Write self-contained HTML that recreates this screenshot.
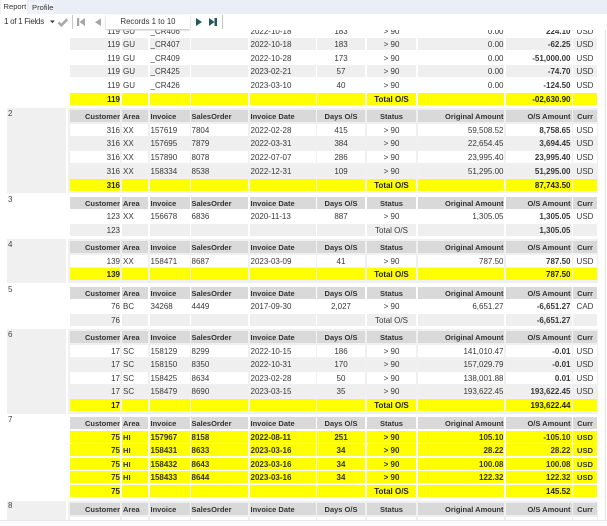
<!DOCTYPE html>
<html><head><meta charset="utf-8"><style>
html,body{margin:0;padding:0;background:#fff;width:607px;height:526px;overflow:hidden}
body{position:relative;font:8px "Liberation Sans",sans-serif;color:#383838}
#c{position:absolute;left:0;top:0;width:607px;height:526px;overflow:hidden;filter:blur(.25px)}
.bg{position:absolute;background:#f0f0f0}
.g{position:absolute;left:8px;font-size:8px;color:#444}
.r{position:absolute;left:0;width:597px;height:12.4px;line-height:13.4px}
.r span{position:absolute;top:0;height:100%;white-space:nowrap;box-sizing:border-box}
.r span:nth-child(1){left:70px;width:50px;text-align:right}
.r span:nth-child(2){left:122px;width:26px;padding-left:1px}
.r span:nth-child(3){left:149.5px;width:40px;padding-left:1px}
.r span:nth-child(4){left:191px;width:57px;padding-left:.5px}
.r span:nth-child(5){left:250px;width:66px;padding-left:.5px}
.r span:nth-child(6){left:317px;width:48px;text-align:center}
.r span:nth-child(7){left:367px;width:49px;text-align:center}
.r span:nth-child(8){left:418px;width:86px;text-align:right;padding-right:.5px}
.r span:nth-child(9){left:506px;width:66px;text-align:right;padding-right:1.5px;font-weight:bold}
.r span:nth-child(10){left:573px;width:24px;text-align:center}
.h span{background:#d9d9d9;font-weight:bold;font-size:7.5px;color:#333}
.a span{background:#efefef}
.w span{background:#fff}
.y span{background:#ff0;color:#222}
.y span:nth-child(1),.y span:nth-child(7){font-weight:bold}
.f span{font-weight:bold;font-size:8px;color:#333}
.f span:nth-child(2),.f span:nth-child(10){font-size:7.6px}
.t span:nth-child(9){font-weight:bold}
#tabs{position:absolute;left:0;top:0;width:607px;height:14px;background:#e9eef7}
#tb{position:absolute;left:0;top:14px;width:607px;height:16px;background:#fff}
.abs{position:absolute}
</style></head><body><div id="c">
<div class="bg" style="left:7px;top:108px;width:59px;height:85px"></div>
<div class="bg" style="left:68px;top:108px;width:530px;height:85px"></div>
<div class="bg" style="left:7px;top:239px;width:59px;height:44px"></div>
<div class="bg" style="left:68px;top:239px;width:530px;height:44px"></div>
<div class="bg" style="left:7px;top:329px;width:59px;height:85px"></div>
<div class="bg" style="left:68px;top:329px;width:530px;height:85px"></div>
<div class="bg" style="left:7px;top:501px;width:59px;height:19px"></div>
<div class="bg" style="left:68px;top:501px;width:530px;height:19px"></div>

<div class="g" style="top:109px">2</div>
<div class="g" style="top:195px">3</div>
<div class="g" style="top:240px">4</div>
<div class="g" style="top:285px">5</div>
<div class="g" style="top:330px">6</div>
<div class="g" style="top:415px">7</div>
<div class="g" style="top:501px">8</div>

<div class="r w" style="top:25px"><span>119</span><span>GU</span><span>_CR406</span><span></span><span>2022-10-18</span><span>183</span><span>&gt; 90</span><span>0.00</span><span>224.10</span><span>USD</span></div>
<div class="r a" style="top:38px"><span>119</span><span>GU</span><span>_CR407</span><span></span><span>2022-10-18</span><span>183</span><span>&gt; 90</span><span>0.00</span><span>-62.25</span><span>USD</span></div>
<div class="r w" style="top:52px"><span>119</span><span>GU</span><span>_CR409</span><span></span><span>2022-10-28</span><span>173</span><span>&gt; 90</span><span>0.00</span><span>-51,000.00</span><span>USD</span></div>
<div class="r a" style="top:65px"><span>119</span><span>GU</span><span>_CR425</span><span></span><span>2023-02-21</span><span>57</span><span>&gt; 90</span><span>0.00</span><span>-74.70</span><span>USD</span></div>
<div class="r w" style="top:79px"><span>119</span><span>GU</span><span>_CR426</span><span></span><span>2023-03-10</span><span>40</span><span>&gt; 90</span><span>0.00</span><span>-124.50</span><span>USD</span></div>
<div class="r y" style="top:93px"><span>119</span><span></span><span></span><span></span><span></span><span></span><span>Total O/S</span><span></span><span>-02,630.90</span><span></span></div>

<div class="r h" style="top:110px"><span>Customer</span><span>Area</span><span>Invoice</span><span>SalesOrder</span><span>Invoice Date</span><span>Days O/S</span><span>Status</span><span>Original Amount</span><span>O/S Amount</span><span>Curr</span></div>
<div class="r w" style="top:124px"><span>316</span><span>XX</span><span>157619</span><span>7804</span><span>2022-02-28</span><span>415</span><span>&gt; 90</span><span>59,508.52</span><span>8,758.65</span><span>USD</span></div>
<div class="r a" style="top:137px"><span>316</span><span>XX</span><span>157695</span><span>7879</span><span>2022-03-31</span><span>384</span><span>&gt; 90</span><span>22,654.45</span><span>3,694.45</span><span>USD</span></div>
<div class="r w" style="top:151px"><span>316</span><span>XX</span><span>157890</span><span>8078</span><span>2022-07-07</span><span>286</span><span>&gt; 90</span><span>23,995.40</span><span>23,995.40</span><span>USD</span></div>
<div class="r a" style="top:165px"><span>316</span><span>XX</span><span>158334</span><span>8538</span><span>2022-12-31</span><span>109</span><span>&gt; 90</span><span>51,295.00</span><span>51,295.00</span><span>USD</span></div>
<div class="r y" style="top:179px"><span>316</span><span></span><span></span><span></span><span></span><span></span><span>Total O/S</span><span></span><span>87,743.50</span><span></span></div>

<div class="r h" style="top:197px"><span>Customer</span><span>Area</span><span>Invoice</span><span>SalesOrder</span><span>Invoice Date</span><span>Days O/S</span><span>Status</span><span>Original Amount</span><span>O/S Amount</span><span>Curr</span></div>
<div class="r w" style="top:210px"><span>123</span><span>XX</span><span>156678</span><span>6836</span><span>2020-11-13</span><span>887</span><span>&gt; 90</span><span>1,305.05</span><span>1,305.05</span><span>USD</span></div>
<div class="r a t" style="top:224px"><span>123</span><span></span><span></span><span></span><span></span><span></span><span>Total O/S</span><span></span><span>1,305.05</span><span></span></div>

<div class="r h" style="top:241px"><span>Customer</span><span>Area</span><span>Invoice</span><span>SalesOrder</span><span>Invoice Date</span><span>Days O/S</span><span>Status</span><span>Original Amount</span><span>O/S Amount</span><span>Curr</span></div>
<div class="r w" style="top:255px"><span>139</span><span>XX</span><span>158471</span><span>8687</span><span>2023-03-09</span><span>41</span><span>&gt; 90</span><span>787.50</span><span>787.50</span><span>USD</span></div>
<div class="r y" style="top:268px"><span>139</span><span></span><span></span><span></span><span></span><span></span><span>Total O/S</span><span></span><span>787.50</span><span></span></div>

<div class="r h" style="top:287px"><span>Customer</span><span>Area</span><span>Invoice</span><span>SalesOrder</span><span>Invoice Date</span><span>Days O/S</span><span>Status</span><span>Original Amount</span><span>O/S Amount</span><span>Curr</span></div>
<div class="r w" style="top:300px"><span>76</span><span>BC</span><span>34268</span><span>4449</span><span>2017-09-30</span><span>2,027</span><span>&gt; 90</span><span>6,651.27</span><span>-6,651.27</span><span>CAD</span></div>
<div class="r a t" style="top:314px"><span>76</span><span></span><span></span><span></span><span></span><span></span><span>Total O/S</span><span></span><span>-6,651.27</span><span></span></div>

<div class="r h" style="top:331px"><span>Customer</span><span>Area</span><span>Invoice</span><span>SalesOrder</span><span>Invoice Date</span><span>Days O/S</span><span>Status</span><span>Original Amount</span><span>O/S Amount</span><span>Curr</span></div>
<div class="r w" style="top:345px"><span>17</span><span>SC</span><span>158129</span><span>8299</span><span>2022-10-15</span><span>186</span><span>&gt; 90</span><span>141,010.47</span><span>-0.01</span><span>USD</span></div>
<div class="r a" style="top:358px"><span>17</span><span>SC</span><span>158150</span><span>8350</span><span>2022-10-31</span><span>170</span><span>&gt; 90</span><span>157,029.79</span><span>-0.01</span><span>USD</span></div>
<div class="r w" style="top:372px"><span>17</span><span>SC</span><span>158425</span><span>8634</span><span>2023-02-28</span><span>50</span><span>&gt; 90</span><span>138,001.88</span><span>0.01</span><span>USD</span></div>
<div class="r a" style="top:385px"><span>17</span><span>SC</span><span>158479</span><span>8690</span><span>2023-03-15</span><span>35</span><span>&gt; 90</span><span>193,622.45</span><span>193,622.45</span><span>USD</span></div>
<div class="r y" style="top:399px"><span>17</span><span></span><span></span><span></span><span></span><span></span><span>Total O/S</span><span></span><span>193,622.44</span><span></span></div>

<div class="r h" style="top:417px"><span>Customer</span><span>Area</span><span>Invoice</span><span>SalesOrder</span><span>Invoice Date</span><span>Days O/S</span><span>Status</span><span>Original Amount</span><span>O/S Amount</span><span>Curr</span></div>
<div class="r y f" style="top:431px"><span>75</span><span>HI</span><span>157967</span><span>8158</span><span>2022-08-11</span><span>251</span><span>&gt; 90</span><span>105.10</span><span>-105.10</span><span>USD</span></div>
<div class="r y f" style="top:444px"><span>75</span><span>HI</span><span>158431</span><span>8633</span><span>2023-03-16</span><span>34</span><span>&gt; 90</span><span>28.22</span><span>28.22</span><span>USD</span></div>
<div class="r y f" style="top:458px"><span>75</span><span>HI</span><span>158432</span><span>8643</span><span>2023-03-16</span><span>34</span><span>&gt; 90</span><span>100.08</span><span>100.08</span><span>USD</span></div>
<div class="r y f" style="top:471px"><span>75</span><span>HI</span><span>158433</span><span>8644</span><span>2023-03-16</span><span>34</span><span>&gt; 90</span><span>122.32</span><span>122.32</span><span>USD</span></div>
<div class="r y" style="top:485px"><span>75</span><span></span><span></span><span></span><span></span><span></span><span>Total O/S</span><span></span><span>145.52</span><span></span></div>

<div class="r h" style="top:503px"><span>Customer</span><span>Area</span><span>Invoice</span><span>SalesOrder</span><span>Invoice Date</span><span>Days O/S</span><span>Status</span><span>Original Amount</span><span>O/S Amount</span><span>Curr</span></div>
<div class="r w" style="top:517px;height:3px"><span></span><span></span><span></span><span></span><span></span><span></span><span></span><span></span><span></span><span></span></div>

<div class="abs" style="left:0;top:520px;width:607px;height:1px;background:#e6e8ee"></div>
<div class="abs" style="left:0;top:521px;width:607px;height:5px;background:#fbfbfc"></div>
<div class="abs" style="left:605px;top:30px;width:1px;height:490px;background:#e4e4e4"></div>

<div id="tabs"></div>
<div class="abs" style="left:1px;top:0;width:26px;height:14px;background:#fff"></div>
<div class="abs" style="left:3.500px;top:2px;font-size:7.600px;line-height:10px;color:#333">Report</div>
<div class="abs" style="left:29px;top:2px;width:24px;height:12px;background:#f1f3f8"></div>
<div class="abs" style="left:32px;top:3px;font-size:7.600px;line-height:10px;color:#333">Profile</div>
<div id="tb"></div>
<div class="abs" style="left:4px;top:17px;font-size:8px;letter-spacing:-.28px;line-height:10px;color:#333">1 of 1 Fields</div>
<svg class="abs" style="left:0;top:14px" width="240" height="16" viewBox="0 0 240 16">
<path d="M50 6.500h4.800l-2.400 2.600z" fill="#333"/>
<path d="M58.500 8.500l2.800 2.800 6-6" fill="none" stroke="#a9a9a9" stroke-width="2.600"/>
<rect x="72" y="1" width="1" height="14" fill="#c8c8c8"/>
<rect x="77" y="4" width="2.200" height="8" fill="#a5a5a5"/><path d="M85 4v8l-5.500-4z" fill="#a5a5a5"/>
<path d="M101 4.500v7.500l-6-3.750z" fill="#a5a5a5"/>
<path d="M196 4v8l6-4z" fill="#1f5a5e"/>
<path d="M209 4v8l5.500-4z" fill="#1f5a5e"/><rect x="214.500" y="4" width="2.500" height="8" fill="#1f5a5e"/>
<rect x="222" y="1" width="1" height="14" fill="#c8c8c8"/>
</svg>
<div class="abs" style="left:106px;top:15px;width:84px;height:14px;background:#fff;box-shadow:0 1px 2px #bbb;text-align:center;font-size:7.800px;line-height:14px;color:#333">Records 1 to 10</div>
</div></body></html>
